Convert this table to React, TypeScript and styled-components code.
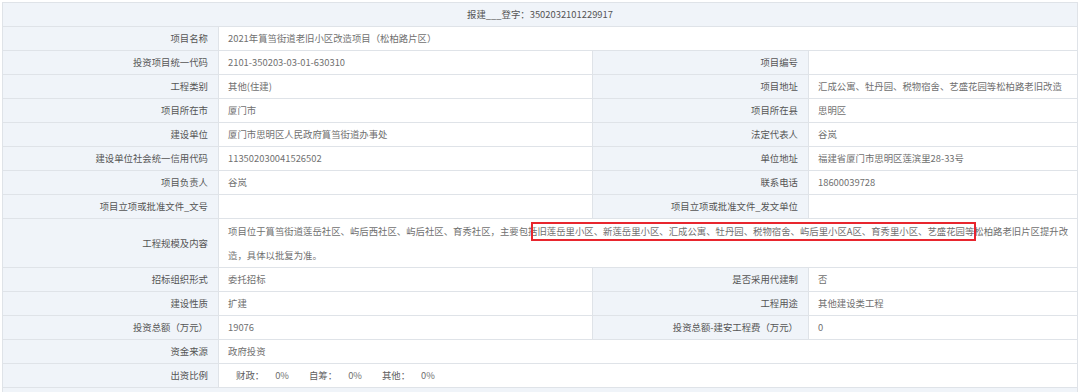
import React from 'react';
import styled, { createGlobalStyle } from 'styled-components';

const GlobalStyle = createGlobalStyle`
  html, body {
    margin: 0;
    padding: 0;
    background: #ffffff;
  }
  body {
    font-family: "Noto Sans CJK SC", "Noto Sans", sans-serif;
  }
`;

interface IRow {
  label: string;
  value?: React.ReactNode;
  label2?: string;
  value2?: React.ReactNode;
}

const rows: IRow[] = [
  { label: '项目名称', value: '2021年篔筜街道老旧小区改造项目（松柏路片区）' },
  { label: '投资项目统一代码', value: '2101-350203-03-01-630310', label2: '项目编号', value2: '' },
  { label: '工程类别', value: '其他(住建)', label2: '项目地址', value2: '汇成公寓、牡丹园、税物宿舍、艺盛花园等松柏路老旧改造' },
  { label: '项目所在市', value: '厦门市', label2: '项目所在县', value2: '思明区' },
  { label: '建设单位', value: '厦门市思明区人民政府篔筜街道办事处', label2: '法定代表人', value2: '谷岚' },
  { label: '建设单位社会统一信用代码', value: '113502030041526502', label2: '单位地址', value2: '福建省厦门市思明区莲滨里28-33号' },
  { label: '项目负责人', value: '谷岚', label2: '联系电话', value2: '18600039728' },
  { label: '项目立项或批准文件_文号', value: '', label2: '项目立项或批准文件_发文单位', value2: '' },
];

const rowsAfter: IRow[] = [
  { label: '招标组织形式', value: '委托招标', label2: '是否采用代建制', value2: '否' },
  { label: '建设性质', value: '扩建', label2: '工程用途', value2: '其他建设类工程' },
  { label: '投资总额（万元）', value: '19076', label2: '投资总额-建安工程费（万元）', value2: '0' },
  { label: '资金来源', value: '政府投资' },
];

const shares = [
  { name: '财政：', pct: '0%' },
  { name: '自筹：', pct: '0%' },
  { name: '其他：', pct: '0%' },
];

const renderRow = (row: IRow) => (
  <tr key={row.label}>
    <SLabel>{row.label}</SLabel>
    {row.label2 === undefined ? (
      <SValue colSpan={3}>{row.value}</SValue>
    ) : (
      <>
        <SValue>{row.value}</SValue>
        <SLabel>{row.label2}</SLabel>
        <SValue>{row.value2}</SValue>
      </>
    )}
  </tr>
);

export const App: React.FC = () => (
  <SPage>
    <GlobalStyle />
    <STable>
      <colgroup>
        <col style={{ width: 216 }} />
        <col style={{ width: 374 }} />
        <col style={{ width: 216 }} />
        <col style={{ width: 269 }} />
      </colgroup>
      <tbody>
        <tr>
          <SHeader colSpan={4}>报建___登字：3502032101229917</SHeader>
        </tr>
        {rows.map(renderRow)}
        <tr>
          <SLabel>工程规模及内容</SLabel>
          <SDescription colSpan={3}>
            项目位于篔筜街道莲岳社区、屿后西社区、屿后社区、育秀社区，主要包括旧莲岳里小区、新莲岳里小区、汇成公寓、牡丹园、税物宿舍、屿后里小区A区、育秀里小区、艺盛花园等松柏路老旧片区提升改
            <br />
            造，具体以批复为准。
            <SMark />
          </SDescription>
        </tr>
        {rowsAfter.map(renderRow)}
        <tr>
          <SLabel>出资比例</SLabel>
          <SValue colSpan={3}>
            <SShares>
              {shares.map((item) => (
                <SShare key={item.name}>
                  <SShareName>{item.name}</SShareName>
                  <span>{item.pct}</span>
                </SShare>
              ))}
            </SShares>
          </SValue>
        </tr>
        <tr>
          <SHeader colSpan={4} />
        </tr>
      </tbody>
    </STable>
  </SPage>
);

export default App;

const SPage = styled.div`
  padding: 2px 3px 0 2px;
  width: 1075px;
`;

const STable = styled.table`
  width: 1075px;
  table-layout: fixed;
  border-collapse: collapse;
  font-size: 9.4px;
  color: #707070;
`;

const SCell = styled.td`
  height: 23px;
  padding: 0;
  border: 1px solid #dfe3e8;
  line-height: 23px;
  white-space: nowrap;
  overflow: hidden;
`;

const SHeader = styled(SCell)`
  color: #555555;
  text-align: center;
  background-color: #f0f4f9;
`;

const SLabel = styled(SCell)`
  color: #555555;
  text-align: right;
  padding-right: 10px;
  background-color: #f0f4f9;
`;

const SValue = styled(SCell)`
  padding-left: 9px;
  background-color: #ffffff;
`;

const SDescription = styled(SValue)`
  position: relative;
  overflow: visible;
  line-height: 24px;
`;

const SMark = styled.span`
  position: absolute;
  left: 312px;
  top: 3px;
  width: 441px;
  height: 15px;
  border: 2px solid #e8262e;
  pointer-events: none;
`;

const SShares = styled.div`
  display: flex;
  gap: 20px;
  padding-left: 8px;
`;

const SShare = styled.div`
  display: flex;
  gap: 11px;
`;

const SShareName = styled.span`
  color: #606060;
`;
